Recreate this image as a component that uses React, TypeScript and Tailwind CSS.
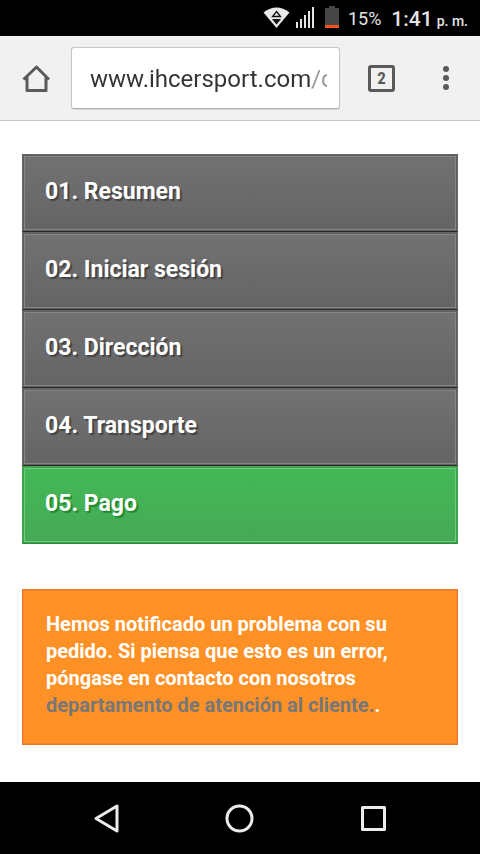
import React from "react";

const steps = ["Resumen", "Iniciar sesión", "Dirección", "Transporte", "Pago"];

function StatusBar() {
  return (
    <header className="flex h-9 items-center justify-end bg-black pr-3 text-[#e4e4e4]">
      <svg className="mr-1.5 h-6 w-[27px]" viewBox="0 0 27 24" aria-hidden="true">
        <path d="M0.5 6.5Q13.5 -3.5 26.5 6.5L13.5 22Z" fill="#e8e8e8" />
        <path d="M13.5 5.5L17.5 10.5H9.5Z" fill="none" stroke="#111" strokeWidth="1.3" />
        <path d="M9 13H18L13.5 18.5Z" fill="#111" />
      </svg>
      <svg className="mr-2.5 h-6 w-[19px]" viewBox="0 0 19 24" fill="#e4e4e4" aria-hidden="true">
        <rect x="0" y="16" width="2" height="6" />
        <rect x="4" y="13" width="2" height="9" />
        <rect x="8" y="9" width="2" height="13" />
        <rect x="12" y="5" width="2" height="17" />
        <rect x="16" y="1" width="2" height="21" />
      </svg>
      <svg className="mr-[9px] h-6 w-3.5" viewBox="0 0 14 24" aria-hidden="true">
        <path d="M0 2H4V0H10V2H14V22H0Z" fill="#464646" />
        <rect y="19" width="14" height="3" fill="#f4511e" />
      </svg>
      <span className="mr-2.5 pt-0.5 text-[18px] leading-6">15%</span>
      <span className="pt-0.5 text-[21px] font-medium leading-6">1:41</span>
      <span className="ml-1 pt-1.5 text-[14px] font-medium leading-5">p. m.</span>
    </header>
  );
}

function BrowserBar() {
  return (
    <div className="flex h-[85px] items-center border-b border-[#c4c4c4] bg-[#f1f1f1] pl-[22px] pr-7 text-[#5a5a5a]">
      <button type="button" aria-label="Inicio" className="mr-[21px] shrink-0">
        <svg className="h-7 w-7" viewBox="0 0 28 28" fill="none" stroke="currentColor" strokeWidth="3" strokeLinejoin="round" aria-hidden="true">
          <path d="M1.5 15.5L14.5 3L27 15.5M5 13V26.5H24V13" />
        </svg>
      </button>
      <div className="h-[62px] min-w-0 flex-1 rounded-[3px] border border-[#c6c6c6] border-b-[#adadad] bg-white pl-[18px] pr-3 shadow-[0_1px_1px_#d8d8d8]">
        <input
          type="text"
          aria-label="Dirección web"
          defaultValue="www.ihcersport.com/c"
          className="h-full w-full bg-[linear-gradient(to_right,#333_222px,#999_222px)] bg-clip-text pt-0.5 text-[24px] text-transparent outline-none"
        />
      </div>
      <button type="button" aria-label="2 pestañas" className="ml-7 flex size-[27px] shrink-0 items-center justify-center rounded-[3px] border-[3px] border-[#5a5a5a] font-['Roboto_Condensed',Roboto,sans-serif] text-[17px] font-bold leading-5">
        2
      </button>
      <button type="button" aria-label="Menú" className="ml-[45px] flex w-3 shrink-0 flex-col items-center gap-[3px]">
        <span className="size-1.5 rounded-full bg-[#5a5a5a]" />
        <span className="size-1.5 rounded-full bg-[#5a5a5a]" />
        <span className="size-1.5 rounded-full bg-[#5a5a5a]" />
      </button>
    </div>
  );
}

function Steps() {
  return (
    <ol className="text-[23px] font-bold leading-7 text-white">
      {steps.map((name, i) => (
        <li
          key={name}
          className={
            i === steps.length - 1
              ? "h-[78px] border border-[#3fa34e] border-b-[#2b8a3a] bg-linear-to-b from-[#43b956] to-[#45a955] px-[22px] pt-[23px] shadow-[inset_0_0_0_1px_#3da54c,inset_0_0_0_2px_#71c97d] [text-shadow:2px_2px_1px_#208931]"
              : "h-[78px] border border-[#666] border-b-[#292929] bg-linear-to-b from-[#727272] to-[#646464] px-[22px] pt-[23px] shadow-[inset_0_0_0_1px_#5f5f5f,inset_0_0_0_2px_#868686] [text-shadow:2px_2px_1px_#444]"
          }
        >
          {`0${i + 1}. ${name}`}
        </li>
      ))}
    </ol>
  );
}

function NavBar() {
  return (
    <nav className="flex h-[72px] items-center justify-between bg-black px-[92px] text-[#ececec]">
      <button type="button" aria-label="Atrás">
        <svg className="h-8 w-7" viewBox="0 0 28 32" fill="none" stroke="currentColor" strokeWidth="3" strokeLinejoin="round" aria-hidden="true">
          <path d="M25 4V29L4 16.5Z" />
        </svg>
      </button>
      <button type="button" aria-label="Pantalla principal">
        <svg className="size-8" viewBox="0 0 32 32" fill="none" stroke="currentColor" strokeWidth="3" aria-hidden="true">
          <circle cx="15.5" cy="16.5" r="12.5" />
        </svg>
      </button>
      <button type="button" aria-label="Recientes">
        <svg className="h-8 w-7" viewBox="0 0 28 32" fill="none" stroke="currentColor" strokeWidth="3" strokeLinejoin="round" aria-hidden="true">
          <rect x="2.5" y="5.5" width="22" height="22" />
        </svg>
      </button>
    </nav>
  );
}

export default function App() {
  return (
    <div className="flex min-h-screen flex-col bg-white font-[Roboto,sans-serif]">
      <StatusBar />
      <BrowserBar />
      <main className="flex-1 px-[22px] pb-9 pt-[33px]">
        <Steps />
        <p className="mt-[45px] border border-[#e8772a] bg-[#fe9126] px-[23px] pb-[25px] pt-[21px] text-[20px] font-bold leading-[27px] text-white shadow-[inset_0_0_0_1px_#f5852b]">
          Hemos notificado un problema con su pedido. Si piensa que esto es un error, póngase en contacto con nosotros{" "}
          <a href="#contacto" className="text-[#777]">departamento de atención al cliente.</a>.
        </p>
      </main>
      <NavBar />
    </div>
  );
}
